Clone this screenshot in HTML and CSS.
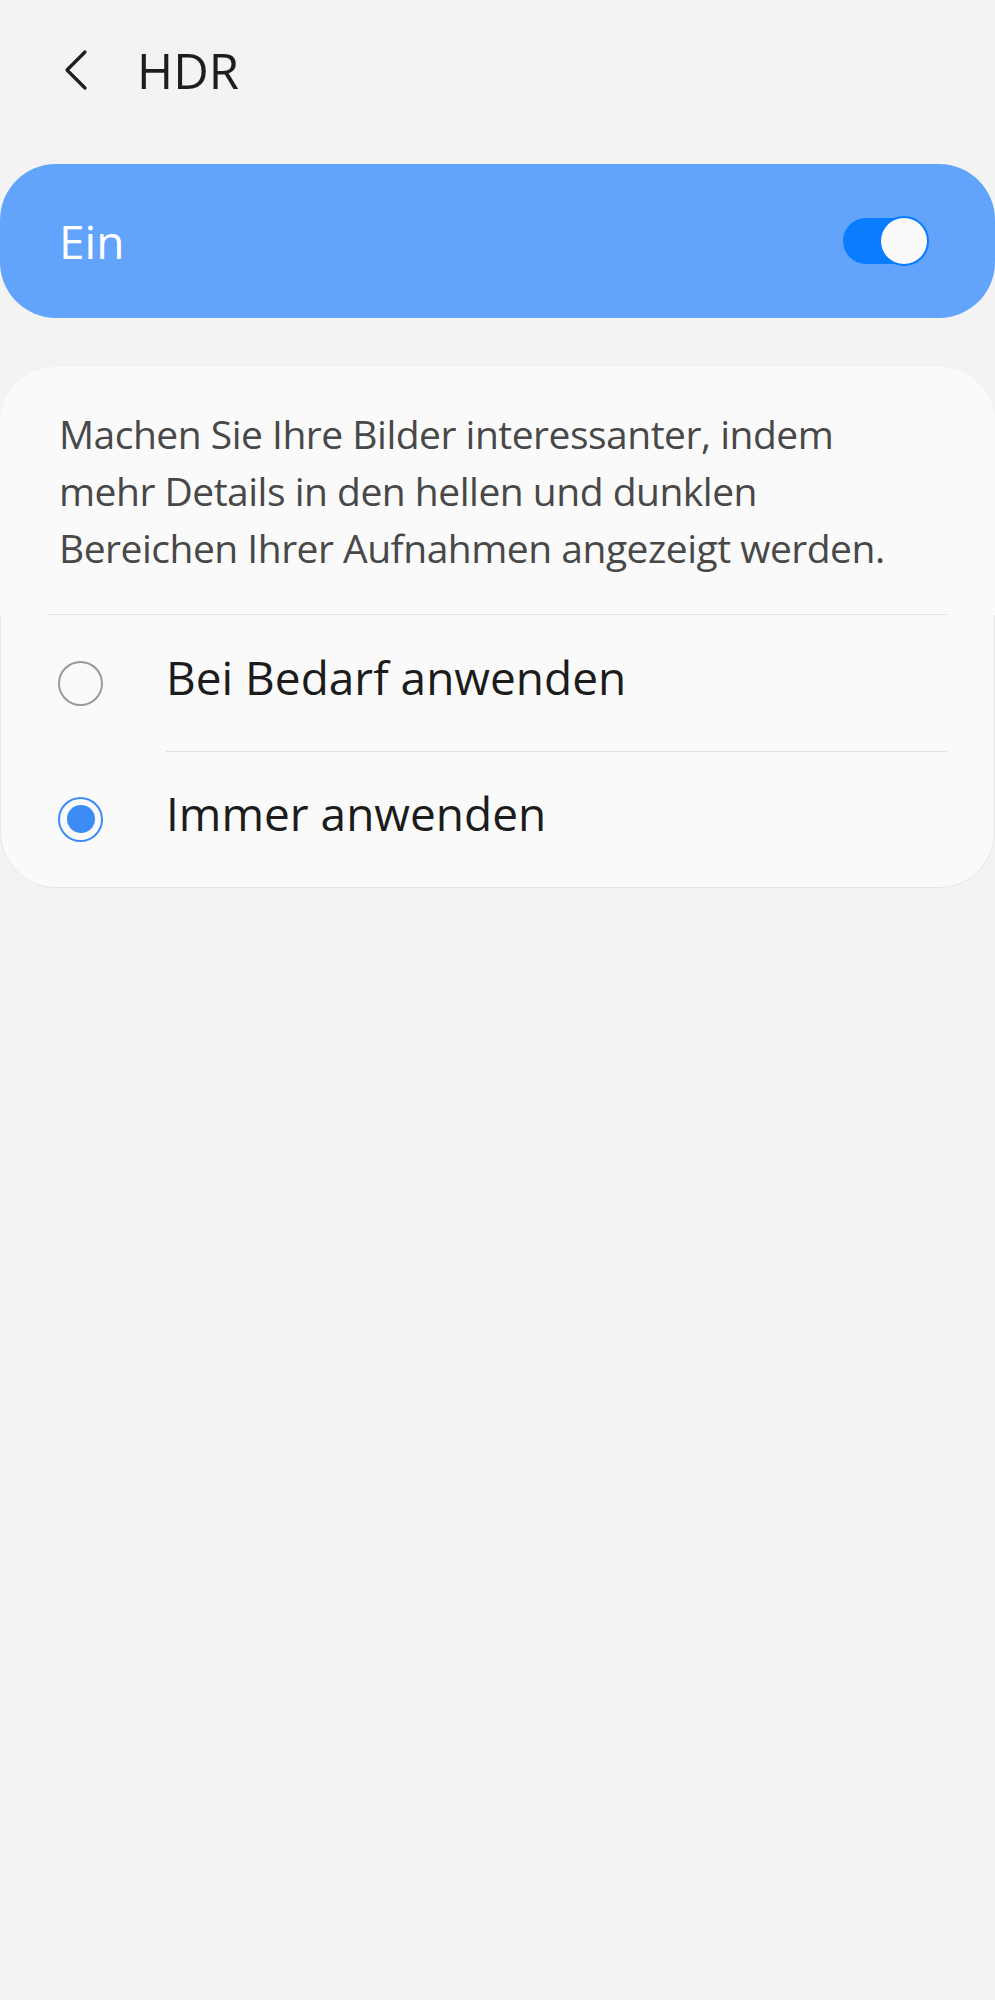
FILE: index.html
```html
<!DOCTYPE html>
<html lang="de">
<head>
  <meta charset="UTF-8" />
  <meta name="viewport" content="width=device-width, initial-scale=1.0"/>
  <title>HDR</title>
  <link rel="stylesheet" href="styles.css">
</head>
<body>

  <div class="appbar">
    <button class="back" aria-label="Zurück">
      <svg width="26" height="42" viewBox="0 0 26 42">
        <path d="M22 3 L4 21 L22 39" fill="none" stroke="#1d1d1d" stroke-width="3.2" stroke-linecap="round" stroke-linejoin="round"/>
      </svg>
    </button>
    <h1>HDR</h1>
  </div>

  <div class="master">
    <span>Ein</span>
    <label class="switch">
      <input type="checkbox" checked />
      <span class="track"></span>
      <span class="thumb"></span>
    </label>
  </div>

  <div class="card">
    <p class="desc">Machen Sie Ihre Bilder interessanter, indem<br>mehr Details in den hellen und dunklen<br>Bereichen Ihrer Aufnahmen angezeigt werden.</p>
    <div class="options">
      <label class="option">
        <input type="radio" name="mode" />
        <span class="radio"></span>
        <span class="option-text">Bei Bedarf anwenden</span>
      </label>
      <label class="option">
        <input type="radio" name="mode" checked />
        <span class="radio"></span>
        <span class="option-text">Immer anwenden</span>
      </label>
    </div>
  </div>

</body>
</html>
```

FILE: styles.css
```css
body {
  margin: 0;
  background: #f3f3f3;
  font-family: "Open Sans", "Noto Sans", Arial, sans-serif;
  color: #1d1d1d;
}
.appbar {
  display: flex;
  align-items: center;
  height: 140px;
  padding-left: 63px;
}
.back {
  background: none;
  border: none;
  padding: 0;
  width: 36px;
  height: 44px;
  display: flex;
  align-items: center;
  cursor: pointer;
}
.appbar h1 {
  margin: 0 0 0 38px;
  font-size: 49px;
  font-weight: 400;
  color: #1d1d1d;
}
.master {
  display: flex;
  align-items: center;
  justify-content: space-between;
  height: 154px;
  margin-top: 24px;
  padding: 0 66px 0 59px;
  background: #62a4fb;
  border-radius: 56px;
  color: white;
  font-size: 46px;
}
.switch {
  position: relative;
  width: 86px;
  height: 50px;
  cursor: pointer;
}
.switch input,
.option input {
  display: none;
}
.track {
  position: absolute;
  left: 0;
  top: 2px;
  width: 80px;
  height: 46px;
  border-radius: 23px;
  background: #0a7cff;
}
.thumb {
  position: absolute;
  right: 0;
  top: 0;
  width: 46px;
  height: 46px;
  border-radius: 50%;
  background: #fafafa;
  border: 2px solid #0a7cff;
}
.card {
  margin-top: 49px;
  background: #fafafa;
  border-radius: 56px;
}
.desc {
  margin: 0 48px;
  padding: 38px 0 38px 11px;
  font-size: 39px;
  letter-spacing: -0.5px;
  line-height: 57px;
  color: #484848;
  border-bottom: 1px solid #e2e2e2;
}
.options {
  border: 1px solid #e6e6e6;
  border-top: none;
  border-radius: 0 0 56px 56px;
}
.option {
  display: flex;
  align-items: center;
  height: 136px;
  cursor: pointer;
}
.option + .option .option-text {
  border-top: 1px solid #e2e2e2;
}
.radio {
  flex: none;
  width: 45px;
  height: 45px;
  margin: 0 63px 0 57px;
  border: 2px solid #9a9a9a;
  border-radius: 50%;
  box-sizing: border-box;
  display: flex;
  align-items: center;
  justify-content: center;
}
.option input:checked + .radio {
  border-color: #3d8cf5;
}
.option input:checked + .radio::after {
  content: "";
  width: 28px;
  height: 28px;
  border-radius: 50%;
  background: #3d8cf5;
}
.option-text {
  flex: 1;
  align-self: stretch;
  display: flex;
  align-items: center;
  margin-right: 47px;
  padding-bottom: 13px;
  font-size: 46px;
  color: #1c1c1c;
}
```
